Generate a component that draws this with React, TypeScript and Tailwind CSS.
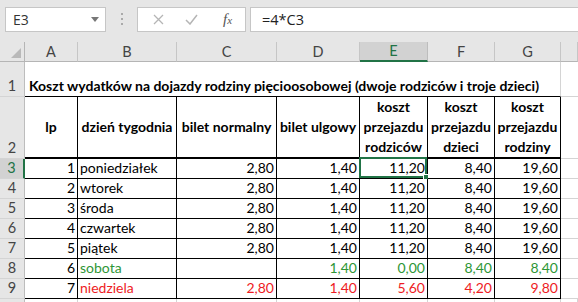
import React from 'react';

const font = 'font-["Lato","Liberation_Sans",sans-serif]';

type Row = {
  n: number;
  day: string;
  c: string;
  d: string;
  e: string;
  f: string;
  g: string;
  tone?: 'green' | 'red';
};

const rows: Row[] = [
  { n: 1, day: 'poniedziałek', c: '2,80', d: '1,40', e: '11,20', f: '8,40', g: '19,60' },
  { n: 2, day: 'wtorek', c: '2,80', d: '1,40', e: '11,20', f: '8,40', g: '19,60' },
  { n: 3, day: 'środa', c: '2,80', d: '1,40', e: '11,20', f: '8,40', g: '19,60' },
  { n: 4, day: 'czwartek', c: '2,80', d: '1,40', e: '11,20', f: '8,40', g: '19,60' },
  { n: 5, day: 'piątek', c: '2,80', d: '1,40', e: '11,20', f: '8,40', g: '19,60' },
  { n: 6, day: 'sobota', c: '', d: '1,40', e: '0,00', f: '8,40', g: '8,40', tone: 'green' },
  { n: 7, day: 'niedziela', c: '2,80', d: '1,40', e: '5,60', f: '4,20', g: '9,80', tone: 'red' },
];

const cols = ['A', 'B', 'C', 'D', 'E', 'F', 'G', ''];

function RowHead({ label, active }: { label: string; active?: boolean }) {
  return (
    <div
      className={`flex items-end justify-center pb-[1px] border-b border-[#d4d4d4] text-[14.5px] leading-[18px] ${
        active
          ? 'bg-[#d2d2d2] text-[#217346] border-r-2 border-r-[#217346]'
          : 'bg-[#e6e6e6] text-[#444] border-r border-r-[#bdbdbd]'
      }`}
    >
      {label}
    </div>
  );
}

function Cell({
  children,
  right,
  tone,
  sel,
}: {
  children?: React.ReactNode;
  right?: boolean;
  tone?: 'green' | 'red';
  sel?: boolean;
}) {
  const color = tone === 'green' ? 'text-[#2e9636]' : tone === 'red' ? 'text-[#ee1c24]' : 'text-black';
  return (
    <div
      className={`relative flex items-end px-[2px] pb-[1px] border-r border-b border-black text-[14px] leading-[18px] whitespace-nowrap ${color} ${
        right ? 'justify-end' : 'justify-start'
      }`}
    >
      {children}
      {sel && (
        <div className="absolute -left-[1px] -top-[2px] right-0 bottom-0 border-2 border-[#217346]">
          <div className="absolute -right-[4px] -bottom-[4px] h-[6px] w-[6px] bg-[#217346] border border-white" />
        </div>
      )}
    </div>
  );
}

function HeadCell({ lines }: { lines: string[] }) {
  return (
    <div className="flex flex-col items-center justify-center border-r border-black border-b-2 border-b-black text-[14px] font-bold leading-[20px] whitespace-nowrap">
      {lines.map((l) => (
        <span key={l}>{l}</span>
      ))}
    </div>
  );
}

export default function App() {
  return (
    <div className={`w-[578px] h-[302px] overflow-hidden bg-white ${font}`}>
      {/* formula bar */}
      <div className="flex h-[42px] items-start bg-[#e6e6e6] pt-[7px] pl-[5px]">
        <div className="flex h-[25px] w-[101px] items-center justify-between border border-[#c6c6c6] bg-white pl-[7px] pr-[6px] text-[#333] font-['Open_Sans',sans-serif]">
          <span className="text-[14px]">E3</span>
          <svg width="8" height="5" viewBox="0 0 8 5">
            <path d="M0 0h8L4 5z" fill="#777" />
          </svg>
        </div>
        <div className="flex w-[31px] flex-col items-center gap-[3px] pt-[6px]">
          <span className="h-[2px] w-[2px] bg-[#aaa]" />
          <span className="h-[2px] w-[2px] bg-[#aaa]" />
          <span className="h-[2px] w-[2px] bg-[#aaa]" />
        </div>
        <div className="flex h-[25px] w-[109px] items-center border border-[#c6c6c6] bg-white">
          <svg className="ml-[15px]" width="11" height="11" viewBox="0 0 11 11">
            <path d="M1 1l9 9M10 1l-9 9" stroke="#b5b5b5" strokeWidth="1.3" />
          </svg>
          <svg className="ml-[21px]" width="13" height="11" viewBox="0 0 13 11">
            <path d="M1 6l4 4 7-9" stroke="#b5b5b5" strokeWidth="1.5" fill="none" />
          </svg>
          <span className="ml-[25px] font-['Liberation_Serif',serif] italic text-[15px] text-[#555]">
            f<span className="text-[11px]">x</span>
          </span>
        </div>
        <div className="ml-[4px] flex h-[25px] flex-1 items-center border border-r-0 border-[#c6c6c6] bg-white pl-[11px] text-[#222] font-['Open_Sans',sans-serif]">
          <span className="text-[14.5px]">=4*C3</span>
        </div>
      </div>

      {/* sheet */}
      <div className="grid grid-cols-[25px_53px_99px_100px_83px_68px_67px_66px_1fr] grid-rows-[20px_35px_62px_repeat(7,20px)_1fr] h-[260px]">
        {/* column headers */}
        <div className="relative bg-[#e6e6e6] border-r border-b border-[#b5b5b5]">
          <svg className="absolute right-[3px] bottom-[3px]" width="10" height="10" viewBox="0 0 10 10">
            <path d="M10 0v10H0z" fill="#b9b9b9" />
          </svg>
        </div>
        {cols.map((c, i) => (
          <div
            key={i}
            className={`flex items-center justify-center text-[14.5px] ${
              c === 'E'
                ? 'bg-[#d2d2d2] text-[#217346] border-b-2 border-b-[#217346] border-r border-r-[#bdbdbd]'
                : 'bg-[#e6e6e6] text-[#444] border-b border-b-[#b5b5b5] border-r border-r-[#c6c6c6]'
            }`}
          >
            {c}
          </div>
        ))}

        {/* row 1 */}
        <RowHead label="1" />
        <div className="col-span-7 flex items-end whitespace-nowrap border-b border-black border-r border-r-[#d4d4d4] pl-[4px] pb-[1px] text-[14px] font-bold leading-[18px]">
          Koszt wydatków na dojazdy rodziny pięcioosobowej (dwoje rodziców i troje dzieci)
        </div>
        <div className="border-b border-[#d4d4d4]" />

        {/* row 2 */}
        <RowHead label="2" />
        <HeadCell lines={['lp']} />
        <HeadCell lines={['dzień tygodnia']} />
        <HeadCell lines={['bilet normalny']} />
        <HeadCell lines={['bilet ulgowy']} />
        <HeadCell lines={['koszt', 'przejazdu', 'rodziców']} />
        <HeadCell lines={['koszt', 'przejazdu', 'dzieci']} />
        <HeadCell lines={['koszt', 'przejazdu', 'rodziny']} />
        <div className="border-b border-[#d4d4d4]" />

        {/* data rows */}
        {rows.map((r, i) => (
          <React.Fragment key={r.n}>
            <RowHead label={String(i + 3)} active={i === 0} />
            <Cell right>{r.n}</Cell>
            <Cell tone={r.tone}>{r.day}</Cell>
            <Cell right tone={r.tone}>{r.c}</Cell>
            <Cell right tone={r.tone}>{r.d}</Cell>
            <Cell right tone={r.tone} sel={i === 0}>{r.e}</Cell>
            <Cell right tone={r.tone}>{r.f}</Cell>
            <Cell right tone={r.tone}>{r.g}</Cell>
            <div className="border-b border-[#d4d4d4]" />
          </React.Fragment>
        ))}

        {/* row 10 (mostly hidden) */}
        <div className="bg-[#e6e6e6] border-r border-[#bdbdbd]" />
        {cols.map((c, i) => (
          <div key={i} className="border-r border-[#d4d4d4]" />
        ))}
      </div>
    </div>
  );
}
